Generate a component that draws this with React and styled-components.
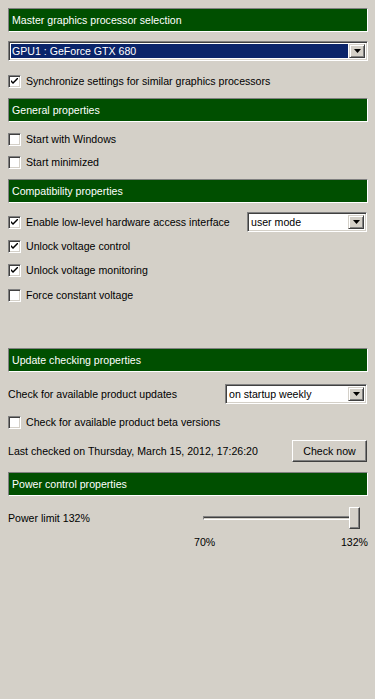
import React from "react";
import styled, { createGlobalStyle } from "styled-components";

const Global = createGlobalStyle`
  html, body { margin: 0; padding: 0; background: #d4d0c8; }
  body { font-family: "Liberation Sans", Arial, sans-serif; font-size: 10.6px; color: #000; }
`;

const Page = styled.div`
  width: 375px;
  height: 699px;
  box-sizing: border-box;
  padding: 8px 7px 0 8px;
  background: #d4d0c8;
  display: flex;
  flex-direction: column;
`;

const Header = styled.div`
  height: 24px;
  box-sizing: border-box;
  margin-top: ${(p) => p.$mt || 0}px;
  background: #004f00;
  border-top: 1px solid #808080;
  border-left: 1px solid #808080;
  border-right: 1px solid #ffffff;
  border-bottom: 1px solid #ffffff;
  color: #fff;
  display: flex;
  align-items: center;
  padding-left: 3px;
`;

const Row = styled.div`
  height: ${(p) => p.$h || 20}px;
  margin-top: ${(p) => p.$mt || 0}px;
  display: flex;
  align-items: center;
  justify-content: space-between;
`;

const CheckLabel = styled.label`
  display: flex;
  align-items: center;
  gap: 5px;
`;

const Box = styled.span`
  width: 13px;
  height: 13px;
  box-sizing: border-box;
  background: #fff;
  border-top: 1px solid #808080;
  border-left: 1px solid #808080;
  border-right: 1px solid #fff;
  border-bottom: 1px solid #fff;
  box-shadow: inset 1px 1px 0 #404040, inset -1px -1px 0 #d4d0c8;
  display: flex;
  align-items: center;
  justify-content: center;
  flex: none;
`;

const Check = ({ checked, children }) => (
  <CheckLabel>
    <Box>
      {checked && (
        <svg width="7" height="7" viewBox="0 0 7 7">
          <path d="M0 2 L0 4 L2 6 L7 1 L7 -1 L2 4 Z" fill="#000" />
        </svg>
      )}
    </Box>
    <span>{children}</span>
  </CheckLabel>
);

const Select = styled.div`
  width: ${(p) => (p.$w ? p.$w + "px" : "auto")};
  flex: ${(p) => (p.$w ? "none" : "1")};
  margin-right: ${(p) => p.$mr || 0}px;
  height: 20px;
  box-sizing: border-box;
  background: #fff;
  border-top: 1px solid #808080;
  border-left: 1px solid #808080;
  border-right: 1px solid #fff;
  border-bottom: 1px solid #fff;
  box-shadow: inset 1px 1px 0 #404040, inset -1px -1px 0 #d4d0c8;
  padding: 2px;
  display: flex;
  align-items: stretch;
`;

const Value = styled.div`
  flex: 1;
  display: flex;
  align-items: center;
  padding-left: 1px;
  margin-right: 1px;
  background: ${(p) => (p.$sel ? "#0a246a" : "transparent")};
  color: ${(p) => (p.$sel ? "#fff" : "#000")};
`;

const Arrow = styled.div`
  width: 16px;
  box-sizing: border-box;
  background: #d4d0c8;
  border-top: 1px solid #d4d0c8;
  border-left: 1px solid #d4d0c8;
  border-right: 1px solid #404040;
  border-bottom: 1px solid #404040;
  box-shadow: inset 1px 1px 0 #fff, inset -1px -1px 0 #808080;
  display: flex;
  align-items: center;
  justify-content: center;
`;

const Dropdown = ({ value, selected, w, mr }) => (
  <Select $w={w} $mr={mr}>
    <Value $sel={selected}>{value}</Value>
    <Arrow>
      <svg width="7" height="4" viewBox="0 0 7 4">
        <path d="M0 0 H7 L3.5 4 Z" fill="#000" />
      </svg>
    </Arrow>
  </Select>
);

const Button = styled.button`
  width: 75px;
  height: 22px;
  margin-right: 1px;
  box-sizing: border-box;
  font: inherit;
  color: #000;
  background: #d4d0c8;
  border-top: 1px solid #fff;
  border-left: 1px solid #fff;
  border-right: 1px solid #404040;
  border-bottom: 1px solid #404040;
  box-shadow: inset -1px -1px 0 #808080;
  padding: 0;
`;

const SliderWrap = styled.div`
  width: 158px;
  margin-right: 8px;
  position: relative;
  height: 22px;
  display: flex;
  align-items: center;
`;

const Track = styled.div`
  margin-left: 1px;
  width: 152px;
  height: 4px;
  box-sizing: border-box;
  border-top: 1px solid #808080;
  border-left: 1px solid #808080;
  border-bottom: 1px solid #fff;
  border-right: 1px solid #fff;
  box-shadow: inset 0 1px 0 #404040;
  background: #d4d0c8;
`;

const Thumb = styled.div`
  position: absolute;
  top: 0;
  width: 11px;
  height: 22px;
  box-sizing: border-box;
  background: #d4d0c8;
  border-top: 1px solid #fff;
  border-left: 1px solid #fff;
  border-right: 1px solid #404040;
  border-bottom: 1px solid #404040;
  box-shadow: inset -1px -1px 0 #808080;
`;

const Ticks = styled.div`
  width: 174px;
  display: flex;
  justify-content: space-between;
`;

export default function App() {
  const pct = 1;
  return (
    <>
      <Global />
      <Page>
        <Header>Master graphics processor selection</Header>
        <Row $mt={9}>
          <Dropdown value="GPU1 : GeForce GTX 680" selected />
        </Row>
        <Row $mt={10}>
          <Check checked>Synchronize settings for similar graphics processors</Check>
        </Row>

        <Header $mt={7}>General properties</Header>
        <Row $mt={7}>
          <Check>Start with Windows</Check>
        </Row>
        <Row $mt={3}>
          <Check>Start minimized</Check>
        </Row>

        <Header $mt={7}>Compatibility properties</Header>
        <Row $mt={9}>
          <Check checked>Enable low-level hardware access interface</Check>
          <Dropdown value="user mode" w={120} mr={1} />
        </Row>
        <Row $mt={4}>
          <Check checked>Unlock voltage control</Check>
        </Row>
        <Row $mt={4}>
          <Check checked>Unlock voltage monitoring</Check>
        </Row>
        <Row $mt={5}>
          <Check>Force constant voltage</Check>
        </Row>

        <Header $mt={43}>Update checking properties</Header>
        <Row $mt={12}>
          <span>Check for available product updates</span>
          <Dropdown value="on startup weekly" w={142} mr={1} />
        </Row>
        <Row $mt={8}>
          <Check>Check for available product beta versions</Check>
        </Row>
        <Row $mt={8} $h={22}>
          <span>Last checked on Thursday, March 15, 2012, 17:26:20</span>
          <Button>Check now</Button>
        </Row>

        <Header $mt={10}>Power control properties</Header>
        <Row $mt={11} $h={22}>
          <span>Power limit 132%</span>
          <SliderWrap>
            <Track />
            <Thumb style={{ left: `${pct * 147}px` }} />
          </SliderWrap>
        </Row>
        <Row $mt={5} $h={16}>
          <span />
          <Ticks>
            <span>70%</span>
            <span>132%</span>
          </Ticks>
        </Row>
      </Page>
    </>
  );
}
